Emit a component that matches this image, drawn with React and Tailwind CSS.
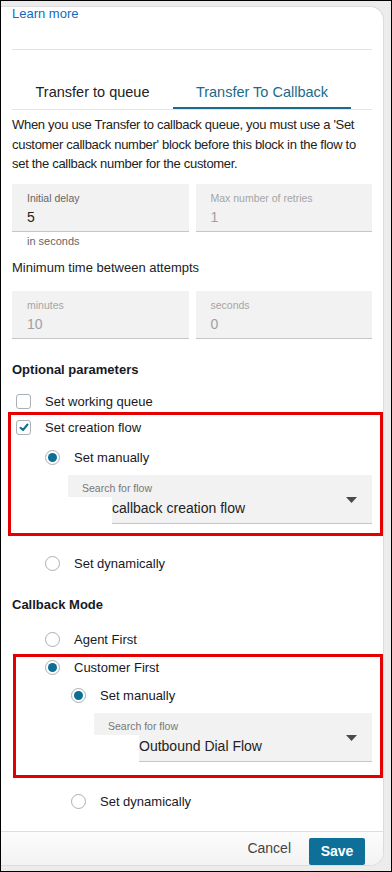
import React from "react";

function Radio({ checked }) {
  return (
    <span className="w-[15px] h-[15px] rounded-full border border-[#aab0b5] bg-white flex items-center justify-center shrink-0">
      {checked && <span className="w-[9px] h-[9px] rounded-full bg-[#0c6f98]" />}
    </span>
  );
}

function Checkbox({ checked }) {
  return (
    <span className="w-[15px] h-[15px] rounded-[3px] border border-[#aab0b5] bg-white flex items-center justify-center shrink-0">
      {checked && (
        <svg width="10" height="9" viewBox="0 0 10 9">
          <path d="M1.5 4.8 L4 7 L8.5 1.5" fill="none" stroke="#0c6f98" strokeWidth="2" strokeLinecap="round" strokeLinejoin="round" />
        </svg>
      )}
    </span>
  );
}

function Field({ label, value, disabled }) {
  return (
    <div className="h-[48px] bg-[#f2f2f2] border-b border-[#c6c6c6] pl-[15px] pt-[8px]">
      <div className={`text-[10.5px] leading-[13px] ${disabled ? "text-[#a5a5a5]" : "text-[#666]"}`}>{label}</div>
      <div className={`text-[14px] leading-[18px] mt-[3px] ${disabled ? "text-[#a0a0a0]" : "text-[#222]"}`}>{value}</div>
    </div>
  );
}

function FlowSelect({ value, offset }) {
  return (
    <div className="relative">
      <div className="h-[22px] bg-[#f2f2f2] pl-[14px] pt-[7px] text-[10.5px] leading-[13px] text-[#777]">
        Search for flow
      </div>
      <div className="flex">
        <div className={offset} />
        <div className="flex-1 h-[27px] bg-[#f2f2f2] border-b border-[#c6c6c6] text-[14px] leading-[22px] text-[#222]">
          {value}
        </div>
      </div>
      <svg className="absolute right-[15px] top-[22px]" width="11" height="6" viewBox="0 0 11 6">
        <path d="M0 0 H11 L5.5 6 Z" fill="#4a4a4a" />
      </svg>
    </div>
  );
}

export default function App() {
  return (
    <div
      className="w-[392px] h-[872px] border border-black bg-[#ececec] overflow-hidden flex flex-col text-[#16191f]"
      style={{ fontFamily: '"Liberation Sans", Arial, sans-serif' }}
    >
      <div className="flex-1 mt-[5px] mr-[7px] mb-[5px] bg-white rounded-tr-[14px] rounded-br-[14px] border border-l-0 border-[#dcdcdc] flex flex-col overflow-hidden">
        <div className="flex-1 pl-[11px] pr-[11px]">
          <div className="h-[42px]">
            <a href="#" className="block relative -top-[1px] text-[13px] leading-[16px] text-[#0f6bbf]">Learn more</a>
          </div>
          <div className="border-b border-[#e2e2e2]" />

          <div className="mt-[35px] flex border-b border-[#e4e4e4]">
            <div className="w-[161px] h-[24px] text-center text-[14.5px] leading-[14px] text-[#222]">
              Transfer to queue
            </div>
            <div className="w-[178px] h-[24px] text-center text-[14.5px] leading-[14px] text-[#1b6a8c] border-b-2 border-[#1b6a8c]">
              Transfer To Callback
            </div>
          </div>

          <p className="mt-[5px] text-[13px] tracking-[-0.3px] leading-[19.5px] text-[#222]">
            When you use Transfer to callback queue, you must use a 'Set customer callback number' block before this block in the flow to set the callback number for the customer.
          </p>

          <div className="mt-[10px] grid grid-cols-2 gap-[7px]">
            <Field label="Initial delay" value="5" />
            <Field label="Max number of retries" value="1" disabled />
          </div>
          <div className="pl-[15px] mt-[2px] text-[11px] leading-[14px] text-[#666]">in seconds</div>

          <div className="mt-[10px] text-[13px] leading-[19px] text-[#222]">Minimum time between attempts</div>
          <div className="mt-[14px] grid grid-cols-2 gap-[7px]">
            <Field label="minutes" value="10" disabled />
            <Field label="seconds" value="0" disabled />
          </div>

          <div className="mt-[22px] text-[13px] leading-[18px] font-bold text-[#16191f]">Optional parameters</div>

          <div className="mt-[14px] flex items-center gap-[14px] pl-[4px] h-[18px]">
            <Checkbox />
            <span className="text-[13px]">Set working queue</span>
          </div>

          <div className="mt-[1px] -ml-[4px] -mr-[11px] border-[3px] border-[#e40000] h-[124px] pl-[5px] pt-[4px]">
            <div className="flex items-center gap-[14px] h-[18px]">
              <Checkbox checked />
              <span className="text-[13px]">Set creation flow</span>
            </div>
            <div className="mt-[12px] ml-[29px] flex items-center gap-[14px] h-[18px]">
              <Radio checked />
              <span className="text-[13px]">Set manually</span>
            </div>
            <div className="mt-[8px] ml-[52px] mr-[8px]">
              <FlowSelect value="callback creation flow" offset="w-[44px] bg-white" />
            </div>
          </div>

          <div className="mt-[19px] ml-[33px] flex items-center gap-[14px] h-[18px]">
            <Radio />
            <span className="text-[13px]">Set dynamically</span>
          </div>

          <div className="mt-[23px] text-[13px] leading-[18px] font-bold">Callback Mode</div>

          <div className="mt-[17px] ml-[33px] flex items-center gap-[14px] h-[18px]">
            <Radio />
            <span className="text-[13px]">Agent First</span>
          </div>

          <div className="mt-[5px] ml-[1px] -mr-[11px] border-[3px] border-[#e40000] h-[124px] pt-[2px]">
            <div className="ml-[29px] flex items-center gap-[14px] h-[18px]">
              <Radio checked />
              <span className="text-[13px]">Customer First</span>
            </div>
            <div className="mt-[10px] ml-[55px] flex items-center gap-[14px] h-[18px]">
              <Radio checked />
              <span className="text-[13px]">Set manually</span>
            </div>
            <div className="mt-[8px] ml-[78px] mr-[8px]">
              <FlowSelect value="Outbound Dial Flow" offset="w-[45px] bg-white" />
            </div>
          </div>

          <div className="mt-[15px] ml-[59px] flex items-center gap-[14px] h-[18px]">
            <Radio />
            <span className="text-[13px]">Set dynamically</span>
          </div>
        </div>

        <div className="h-[34px] border-t border-[#dedede] bg-gradient-to-b from-[#fcfcfc] to-[#f3f3f3] flex items-center justify-end pr-[18px] gap-[18px]">
          <button className="text-[14px] text-[#444]">Cancel</button>
          <button className="w-[56px] h-[27px] mt-[6px] bg-[#0e6f98] text-white text-[14px] font-bold rounded-[2px]">Save</button>
        </div>
      </div>
    </div>
  );
}
